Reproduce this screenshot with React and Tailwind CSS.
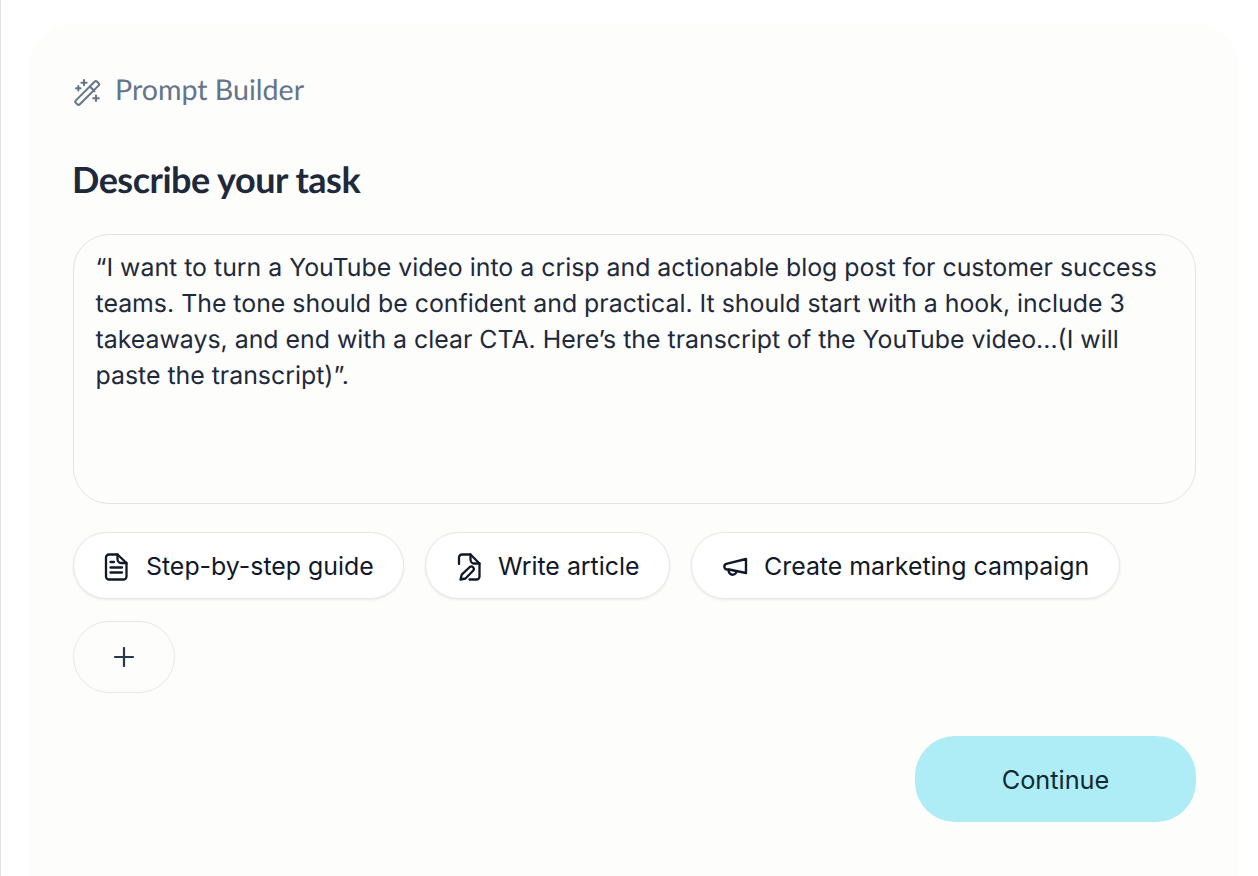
import React from "react";

const WandIcon = () => (
  <svg width="28" height="30" viewBox="0 0 28 30" fill="none" stroke="#64748b" strokeWidth="2" strokeLinecap="round" strokeLinejoin="round" className="overflow-visible">
    <rect x="-2.8" y="-15" width="5.6" height="30" rx="1.8" transform="translate(14.2 18) rotate(45)" />
    <path d="M17.7 12.3 L21.4 16.2" />
    <path d="M8.4 7.7h5.2M11 5.1v5.2" strokeWidth="2" />
    <path d="M3 13.3h4.6M5.3 11v4.6" strokeWidth="2" />
    <path d="M20.2 23.3h5.6M23 20.500v5.600" strokeWidth="2" />
  </svg>
);

const DocIcon = () => (
  <svg width="24" height="28" viewBox="6 5 24 28" fill="none" stroke="#111827" strokeWidth="2.3" strokeLinecap="round" strokeLinejoin="round" className="overflow-visible">
    <path d="M10 7.5h8.5L27.5 16v13.5a3 3 0 0 1-3 3H10a3 3 0 0 1-3-3v-19a3 3 0 0 1 3-3z" />
    <path d="M18.5 7.5v4.500a4 4 0 0 0 4 4h5" />
    <path d="M11.5 15h3.500M11.5 20.500h11.500M11.5 25.500h11.500" />
  </svg>
);

const PenDocIcon = () => (
  <svg width="24" height="28" viewBox="5 5 24 28" fill="none" stroke="#111827" strokeWidth="2.3" strokeLinecap="round" strokeLinejoin="round" className="overflow-visible">
    <path d="M7 17v-6.500a3 3 0 0 1 3-3h8.500L27.500 16.500V29.500a3 3 0 0 1-3 3H17.500" />
    <path d="M18.500 7.500v5a4 4 0 0 0 4 4h5" />
    <path d="M17.800 20a2.500 2.500 0 0 1 3.500 3.500l-7.800 8-5 1 1.200-4.800z" />
  </svg>
);

const MegaphoneIcon = () => (
  <svg width="24" height="28" viewBox="5 4 24 28" fill="none" stroke="#111827" strokeWidth="2.4" strokeLinecap="round" strokeLinejoin="round" className="overflow-visible">
    <path d="M28 11v14l-17-3.500H9.200a2.900 2.900 0 0 1-1-5.600z" />
    <path d="M10.800 21.800a4 4 0 0 0 7.800 1.800" />
  </svg>
);

const PlusIcon = () => (
  <svg width="20" height="20" viewBox="0 0 20 20" fill="none" stroke="#2a3650" strokeWidth="2.2" strokeLinecap="round">
    <path d="M10 1v18M1 10h18" />
  </svg>
);

function Pill({ icon, label, className }) {
  return (
    <button className={`flex h-[67px] items-center gap-[17px] rounded-full border border-[#e8e8e6] bg-white pl-[31px] text-[24.9px] text-[#111827] shadow-[0_1px_3px_rgba(0,0,0,0.08)] ${className}`}>
      {icon}
      <span className="pt-[2px]">{label}</span>
    </button>
  );
}

export default function App() {
  return (
    <div className="h-[876px] w-[1258px] overflow-hidden border-l border-[#e2e2e2] bg-white pl-[28px] pr-[19px] pt-6 font-['Inter',sans-serif] antialiased [text-rendering:geometricPrecision]">
      <div className="h-[900px] rounded-t-[44px] bg-[#fdfdfb] pl-11 pr-[43px] pt-[48px]">
        <div className="flex h-9 items-center gap-[14px] text-[#64748b]">
          <WandIcon />
          <span className="font-['Lato',sans-serif] text-[28.6px] leading-9">Prompt Builder</span>
        </div>

        <h1 className="mt-[49px] -ml-px font-['Lato',sans-serif] text-[36px] font-bold leading-[44px] tracking-[-0.5px] text-[#1e293b]">
          Describe your task
        </h1>

        <div className="mt-[33px] h-[270px] rounded-[36px] border border-[#e3e3e1] pl-[21.5px] pr-[22px] pt-[14px] text-[24.87px] leading-9 text-[#1e293b]">
          “I want to turn a YouTube video into a crisp and actionable blog post for customer success teams. The tone should be confident and practical. It should start with a hook, include 3 takeaways, and end with a clear CTA. Here’s the transcript of the YouTube video...(I will paste the transcript)”.
        </div>

        <div className="mt-[28px] flex">
          <Pill icon={<DocIcon />} label="Step-by-step guide" className="w-[331px]" />
          <Pill icon={<PenDocIcon />} label="Write article" className="ml-[21px] w-[245px]" />
          <Pill icon={<MegaphoneIcon />} label="Create marketing campaign" className="ml-[21px] w-[429px]" />
        </div>

        <button className="mt-[22px] flex h-[72px] w-[102px] items-center justify-center rounded-full border border-[#e8e8e6]">
          <PlusIcon />
        </button>

        <div className="mt-[43px] flex justify-end">
          <button className="h-[86px] w-[281px] rounded-[40px] bg-[#aeecf6] pt-[2px] text-[25.3px] font-normal text-[#0f2a30]">
            Continue
          </button>
        </div>
      </div>
    </div>
  );
}
